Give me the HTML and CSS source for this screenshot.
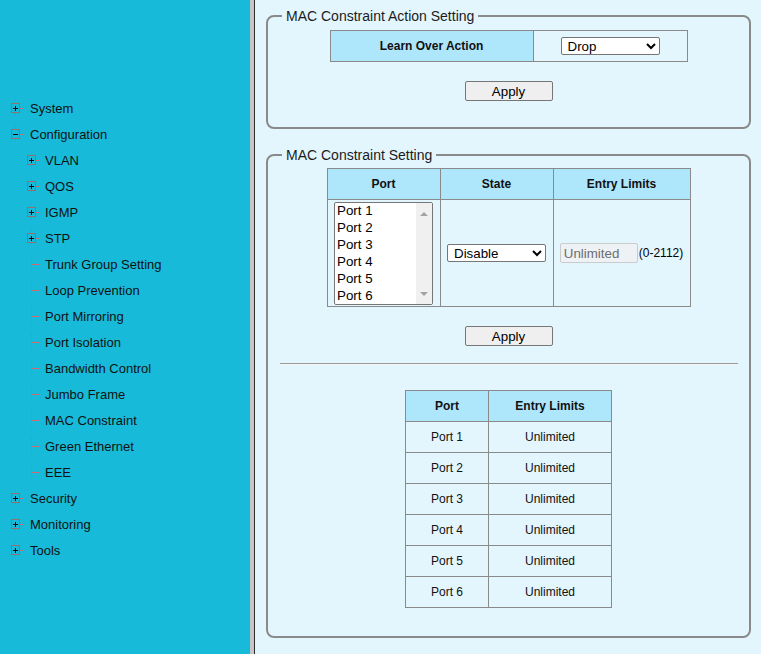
FILE: index.html
```html
<!DOCTYPE html>
<html>
<head>
<meta charset="utf-8">
<link rel="stylesheet" href="styles.css">
</head>
<body>
<svg class="defs" width="0" height="0" aria-hidden="true">
  <defs>
    <pattern id="vdots" x="0" y="0" width="1" height="2" patternUnits="userSpaceOnUse"><rect x="0" y="0" width="1" height="1" fill="#d0666c"/></pattern>
    <pattern id="hdots" x="0" y="0" width="2" height="1" patternUnits="userSpaceOnUse"><rect x="0" y="0" width="1" height="1" fill="#d0666c"/></pattern>
  </defs>
</svg>
<div class="frame">
  <nav class="sidebar">
    <ul class="tree">
      <li class="node top"><svg class="ti" viewBox="0 0 18 18" width="18" height="18"><rect x="9" y="0" width="1" height="4" fill="url(#vdots)"/><rect x="9" y="14" width="1" height="4" fill="url(#vdots)"/><rect x="14" y="9" width="4" height="1" fill="url(#hdots)"/><rect class="box" x="5.5" y="4.5" width="8" height="9"/><path class="sign" d="M7 9.5H12M9.5 7V12"/></svg><span>System</span></li>
      <li class="node top"><svg class="ti" viewBox="0 0 18 18" width="18" height="18"><rect x="9" y="0" width="1" height="4" fill="url(#vdots)"/><rect x="9" y="14" width="1" height="4" fill="url(#vdots)"/><rect x="14" y="9" width="4" height="1" fill="url(#hdots)"/><rect class="box" x="5.5" y="4.5" width="8" height="9"/><path class="sign" d="M7 9.5H12"/></svg><span>Configuration</span></li>
      <li class="node sub"><svg class="ti" viewBox="0 0 18 18" width="18" height="18"><rect x="9" y="0" width="1" height="4" fill="url(#vdots)"/><rect x="9" y="14" width="1" height="4" fill="url(#vdots)"/><rect x="14" y="9" width="4" height="1" fill="url(#hdots)"/><rect class="box" x="5.5" y="4.5" width="8" height="9"/><path class="sign" d="M7 9.5H12M9.5 7V12"/></svg><span>VLAN</span></li>
      <li class="node sub"><svg class="ti" viewBox="0 0 18 18" width="18" height="18"><rect x="9" y="0" width="1" height="4" fill="url(#vdots)"/><rect x="9" y="14" width="1" height="4" fill="url(#vdots)"/><rect x="14" y="9" width="4" height="1" fill="url(#hdots)"/><rect class="box" x="5.5" y="4.5" width="8" height="9"/><path class="sign" d="M7 9.5H12M9.5 7V12"/></svg><span>QOS</span></li>
      <li class="node sub"><svg class="ti" viewBox="0 0 18 18" width="18" height="18"><rect x="9" y="0" width="1" height="4" fill="url(#vdots)"/><rect x="9" y="14" width="1" height="4" fill="url(#vdots)"/><rect x="14" y="9" width="4" height="1" fill="url(#hdots)"/><rect class="box" x="5.5" y="4.5" width="8" height="9"/><path class="sign" d="M7 9.5H12M9.5 7V12"/></svg><span>IGMP</span></li>
      <li class="node sub"><svg class="ti" viewBox="0 0 18 18" width="18" height="18"><rect x="9" y="0" width="1" height="4" fill="url(#vdots)"/><rect x="9" y="14" width="1" height="4" fill="url(#vdots)"/><rect x="14" y="9" width="4" height="1" fill="url(#hdots)"/><rect class="box" x="5.5" y="4.5" width="8" height="9"/><path class="sign" d="M7 9.5H12M9.5 7V12"/></svg><span>STP</span></li>
      <li class="node sub"><svg class="ti" viewBox="0 0 18 18" width="18" height="18"><rect x="9" y="0" width="1" height="18" fill="url(#vdots)"/><rect x="10" y="9" width="8" height="1" fill="url(#hdots)"/></svg><span>Trunk Group Setting</span></li>
      <li class="node sub"><svg class="ti" viewBox="0 0 18 18" width="18" height="18"><rect x="9" y="0" width="1" height="18" fill="url(#vdots)"/><rect x="10" y="9" width="8" height="1" fill="url(#hdots)"/></svg><span>Loop Prevention</span></li>
      <li class="node sub"><svg class="ti" viewBox="0 0 18 18" width="18" height="18"><rect x="9" y="0" width="1" height="18" fill="url(#vdots)"/><rect x="10" y="9" width="8" height="1" fill="url(#hdots)"/></svg><span>Port Mirroring</span></li>
      <li class="node sub"><svg class="ti" viewBox="0 0 18 18" width="18" height="18"><rect x="9" y="0" width="1" height="18" fill="url(#vdots)"/><rect x="10" y="9" width="8" height="1" fill="url(#hdots)"/></svg><span>Port Isolation</span></li>
      <li class="node sub"><svg class="ti" viewBox="0 0 18 18" width="18" height="18"><rect x="9" y="0" width="1" height="18" fill="url(#vdots)"/><rect x="10" y="9" width="8" height="1" fill="url(#hdots)"/></svg><span>Bandwidth Control</span></li>
      <li class="node sub"><svg class="ti" viewBox="0 0 18 18" width="18" height="18"><rect x="9" y="0" width="1" height="18" fill="url(#vdots)"/><rect x="10" y="9" width="8" height="1" fill="url(#hdots)"/></svg><span>Jumbo Frame</span></li>
      <li class="node sub"><svg class="ti" viewBox="0 0 18 18" width="18" height="18"><rect x="9" y="0" width="1" height="18" fill="url(#vdots)"/><rect x="10" y="9" width="8" height="1" fill="url(#hdots)"/></svg><span>MAC Constraint</span></li>
      <li class="node sub"><svg class="ti" viewBox="0 0 18 18" width="18" height="18"><rect x="9" y="0" width="1" height="18" fill="url(#vdots)"/><rect x="10" y="9" width="8" height="1" fill="url(#hdots)"/></svg><span>Green Ethernet</span></li>
      <li class="node sub"><svg class="ti" viewBox="0 0 18 18" width="18" height="18"><rect x="9" y="0" width="1" height="18" fill="url(#vdots)"/><rect x="10" y="9" width="8" height="1" fill="url(#hdots)"/></svg><span>EEE</span></li>
      <li class="node top"><svg class="ti" viewBox="0 0 18 18" width="18" height="18"><rect x="9" y="0" width="1" height="4" fill="url(#vdots)"/><rect x="9" y="14" width="1" height="4" fill="url(#vdots)"/><rect x="14" y="9" width="4" height="1" fill="url(#hdots)"/><rect class="box" x="5.5" y="4.5" width="8" height="9"/><path class="sign" d="M7 9.5H12M9.5 7V12"/></svg><span>Security</span></li>
      <li class="node top"><svg class="ti" viewBox="0 0 18 18" width="18" height="18"><rect x="9" y="0" width="1" height="4" fill="url(#vdots)"/><rect x="9" y="14" width="1" height="4" fill="url(#vdots)"/><rect x="14" y="9" width="4" height="1" fill="url(#hdots)"/><rect class="box" x="5.5" y="4.5" width="8" height="9"/><path class="sign" d="M7 9.5H12M9.5 7V12"/></svg><span>Monitoring</span></li>
      <li class="node top"><svg class="ti" viewBox="0 0 18 18" width="18" height="18"><rect x="9" y="0" width="1" height="4" fill="url(#vdots)"/><rect x="9" y="14" width="1" height="4" fill="url(#vdots)"/><rect x="14" y="9" width="4" height="1" fill="url(#hdots)"/><rect class="box" x="5.5" y="4.5" width="8" height="9"/><path class="sign" d="M7 9.5H12M9.5 7V12"/></svg><span>Tools</span></li>
    </ul>
  </nav>
  <div class="splitter"></div>
  <main class="main">
    <fieldset class="group group-action">
      <legend>MAC Constraint Action Setting</legend>
      <table class="grid action-table">
        <tr>
          <th class="c-learn">Learn Over Action</th>
          <td class="c-drop"><select class="sel"><option>Drop</option><option>Forward</option></select></td>
        </tr>
      </table>
      <div class="btn-row"><button class="btn">Apply</button></div>
    </fieldset>

    <fieldset class="group group-setting">
      <legend>MAC Constraint Setting</legend>
      <table class="grid setting-table">
        <tr class="head">
          <th class="c-port">Port</th>
          <th class="c-state">State</th>
          <th class="c-limit">Entry Limits</th>
        </tr>
        <tr class="body">
          <td>
            <div class="listbox-wrap">
              <select class="listbox" multiple size="6">
                <option>Port 1</option><option>Port 2</option><option>Port 3</option>
                <option>Port 4</option><option>Port 5</option><option>Port 6</option>
              </select>
              <div class="vscroll"><span class="arr-up"></span><span class="arr-down"></span></div>
            </div>
          </td>
          <td><select class="sel"><option>Disable</option><option>Enable</option></select></td>
          <td class="limit-cell"><input class="limit-input" type="text" value="Unlimited" disabled><span class="range">(0-2112)</span></td>
        </tr>
      </table>
      <div class="btn-row btn-row-2"><button class="btn">Apply</button></div>
      <hr class="rule">
      <table class="grid status-table">
        <tr class="head"><th class="c-p">Port</th><th class="c-l">Entry Limits</th></tr>
        <tr><td>Port 1</td><td>Unlimited</td></tr>
        <tr><td>Port 2</td><td>Unlimited</td></tr>
        <tr><td>Port 3</td><td>Unlimited</td></tr>
        <tr><td>Port 4</td><td>Unlimited</td></tr>
        <tr><td>Port 5</td><td>Unlimited</td></tr>
        <tr><td>Port 6</td><td>Unlimited</td></tr>
      </table>
    </fieldset>
  </main>
</div>
</body>
</html>
```
FILE: styles.css
```css
html, body {
  margin: 0;
  padding: 0;
  height: 100%;
}
body {
  font-family: "Liberation Sans", Arial, sans-serif;
  color: #000;
  background: #e4f6fd;
  overflow: hidden;
}
.defs {
  position: absolute;
  width: 0;
  height: 0;
  overflow: hidden;
}
.frame {
  display: flex;
  height: 654px;
}
.sidebar {
  width: 250px;
  flex: none;
  background: #17bbd9;
}
.tree {
  list-style: none;
  margin: 0;
  padding: 95px 0 0 0;
}
.node {
  display: flex;
  align-items: center;
  height: 26px;
  font-size: 13px;
  color: #111;
}
.node.top { padding-left: 6px; }
.node.top span { margin-left: 6px; }
.node.sub { padding-left: 22px; }
.node.sub span { margin-left: 5px; }
.ti { flex: none; display: block; shape-rendering: crispEdges; }
.ti .box {
  fill: none;
  stroke: #94706a;
  stroke-width: 1;
}
.ti .sign {
  fill: none;
  stroke: #000;
  stroke-width: 1;
}
.splitter {
  width: 4px;
  flex: none;
  background: #c6c6c6;
  border-right: 1px solid #2e2e2e;
}
.main {
  flex: 1;
  background: #e4f6fd;
  padding: 8px 10px 0 11px;
}
.group {
  margin: 0;
  padding: 0 0 26px;
  border: 2px solid #8a8a8a;
  border-radius: 8px;
  min-width: 0;
}
.group legend {
  margin-left: 14px;
  padding: 0 4px;
  font-size: 14px;
  color: #1b1b1b;
  line-height: 16px;
}
.group-setting {
  margin-top: 18px;
  padding-bottom: 28px;
}
.grid {
  border-collapse: collapse;
  margin: 0 auto;
  font-size: 12px;
}
.grid th, .grid td {
  border: 1px solid #8a8a8a;
  text-align: center;
  padding: 0;
}
.grid th {
  background: #aee6fc;
  font-weight: bold;
  color: #111;
}
.action-table {
  margin-top: 6px;
}
.action-table tr { height: 31px; }
.c-learn { width: 202px; }
.c-drop { width: 153px; }
.sel {
  width: 99px;
  height: 18px;
  font-family: "Liberation Sans", Arial, sans-serif;
  font-size: 13.33px;
  color: #000;
  background: #fff;
  border: 1px solid #767676;
  border-radius: 2px;
  padding: 0 0 0 2px;
  display: block;
  margin: 0 auto;
}
.btn-row {
  display: flex;
  justify-content: center;
  margin-top: 19px;
}
.btn {
  width: 88px;
  height: 20px;
  font-family: "Liberation Sans", Arial, sans-serif;
  font-size: 13.33px;
  color: #000;
  background: #efefef;
  border: 1px solid #767676;
  border-radius: 2px;
  padding: 0;
}
.setting-table {
  margin-top: 5px;
}
.setting-table .head { height: 31px; }
.setting-table .body { height: 107px; }
.c-port { width: 112px; }
.c-state { width: 112px; }
.c-limit { width: 136px; }
.listbox-wrap {
  display: flex;
  width: 99px;
  height: 103px;
  box-sizing: border-box;
  margin: 0 auto;
  border: 1px solid #767676;
  border-radius: 2px;
  background: #fff;
  overflow: hidden;
}
.listbox {
  flex: 1;
  min-width: 0;
  height: 101px;
  font-family: "Liberation Sans", Arial, sans-serif;
  font-size: 13.33px;
  border: 0;
  background: #fff;
  padding: 0;
  margin: 0;
  overflow: hidden;
  outline: none;
}
.listbox option {
  padding: 0 2px;
  line-height: 17px;
  height: 17px;
  color: #000;
}
.vscroll {
  width: 16px;
  flex: none;
  background: #f0f0f0;
  display: flex;
  flex-direction: column;
  align-items: center;
  justify-content: space-between;
  padding: 9px 0 8px;
  box-sizing: border-box;
}
.arr-up, .arr-down {
  width: 0;
  height: 0;
  border-left: 4px solid transparent;
  border-right: 4px solid transparent;
}
.arr-up { border-bottom: 4px solid #a3a3a3; }
.arr-down { border-top: 4px solid #a3a3a3; }
.limit-cell {
  white-space: nowrap;
}
.limit-input {
  width: 78px;
  height: 20px;
  box-sizing: border-box;
  font-family: "Liberation Sans", Arial, sans-serif;
  font-size: 13.33px;
  color: #6d6d6d;
  background: #eef2f4;
  border: 1px solid #c8ccce;
  border-radius: 2px;
  padding: 0 3px;
  vertical-align: middle;
}
.range {
  font-size: 12px;
  vertical-align: middle;
  margin-left: 1px;
}
.btn-row-2 { margin-top: 19px; }
.rule {
  margin: 17px 11px 0 12px;
  border: 0;
  border-top: 1px solid #9a9a9a;
  border-bottom: 1px solid #f4f4f4;
  height: 0;
}
.status-table {
  margin-top: 25px;
}
.status-table tr { height: 31px; }
.c-p { width: 82px; }
.c-l { width: 122px; }
.status-table td { color: #111; }
```
